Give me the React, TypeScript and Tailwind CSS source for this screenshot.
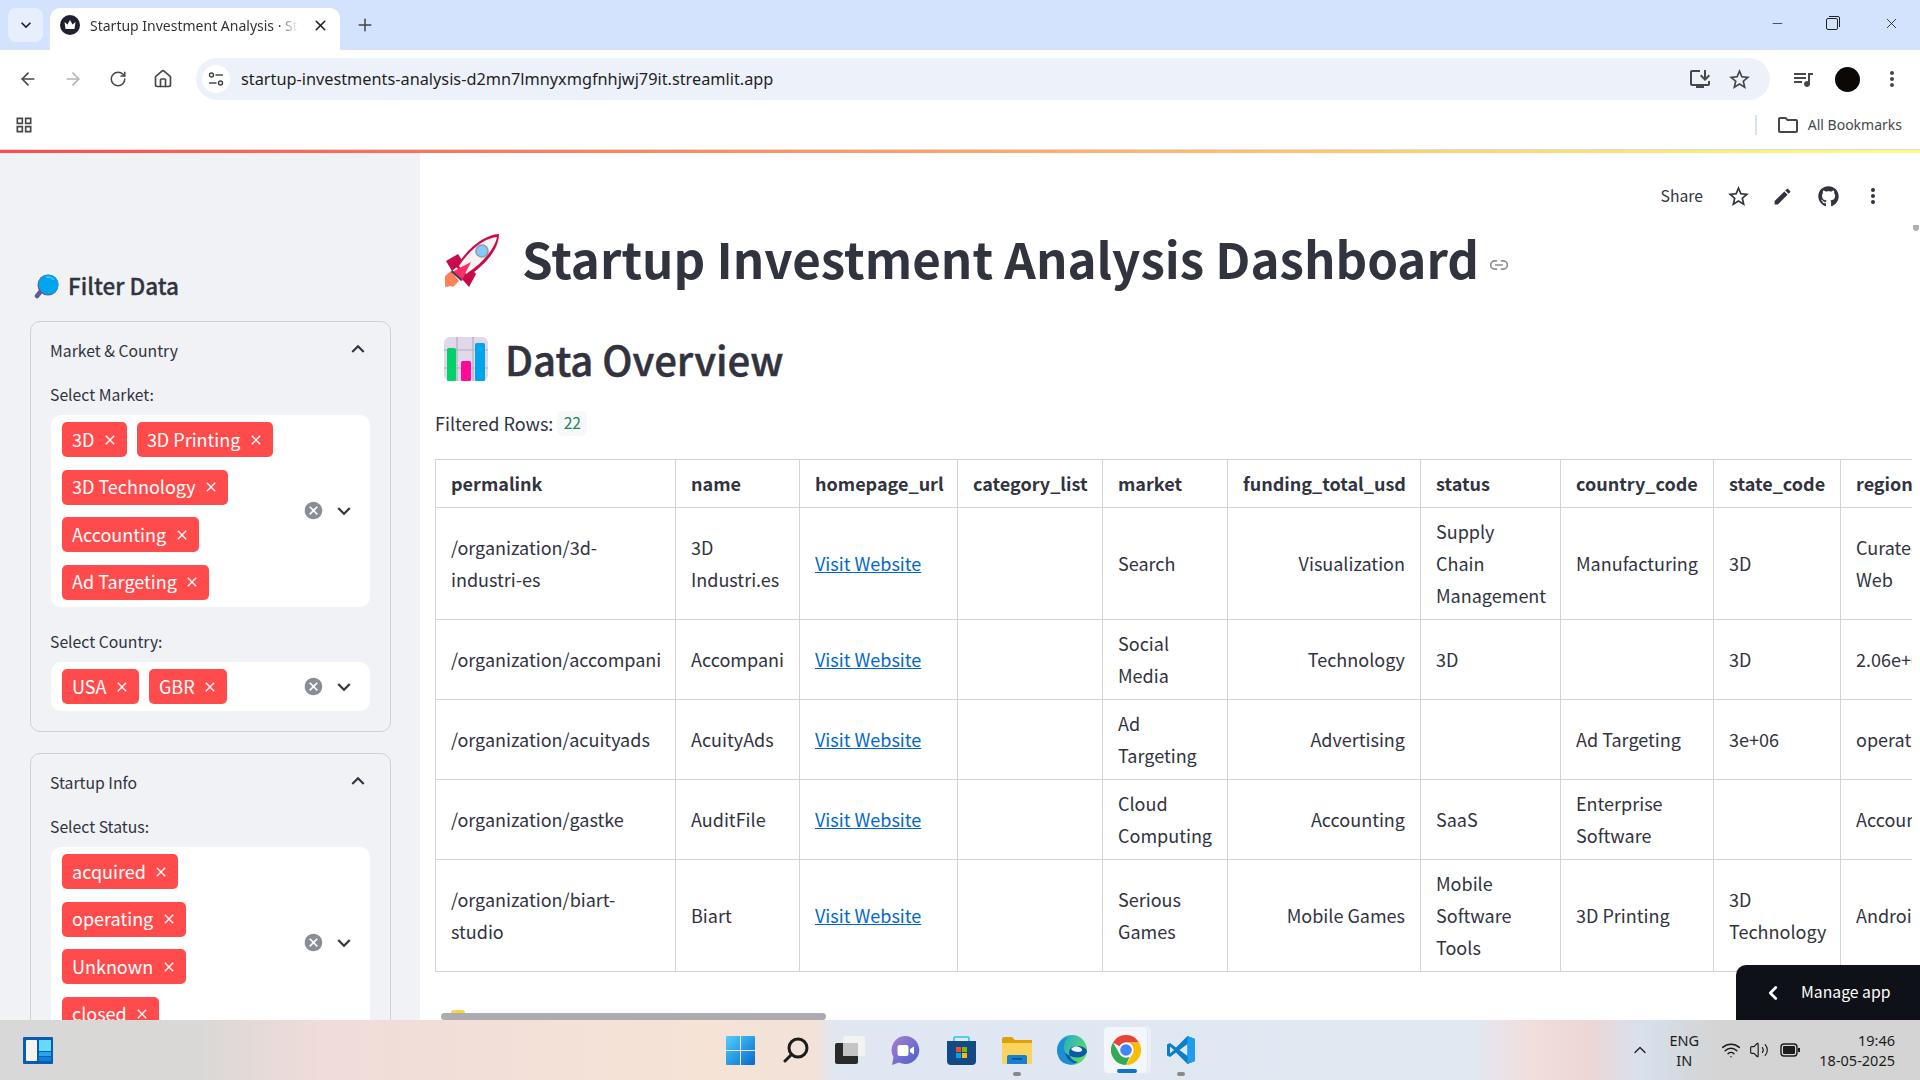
import { ArrowLeft, ArrowRight, RotateCw, Home, Link2, Wifi, Volume2, ChevronUp, ChevronLeft, Plus, X, Minus } from 'lucide-react'
import { FaGithub } from 'react-icons/fa'
import {
  MdEdit,
  MdStarBorder,
  MdMoreVert,
  MdExpandMore,
  MdExpandLess,
  MdCancel,
  MdClose,
  MdOutlineInstallDesktop,
  MdQueueMusic,
  MdOutlineFolder,
  MdKeyboardArrowDown,
  MdGridView,
} from 'react-icons/md'

function Crown() {
  return (
    <svg viewBox="0 0 20 20" className="w-5 h-5 shrink-0">
      <circle cx="10" cy="10" r="10" fill="#1f2030" />
      <path d="M4.5 7 L7.5 9.5 L10 5 L12.5 9.5 L15.5 7 L14.5 14 H5.5 Z" fill="#fff" />
    </svg>
  )
}

function Tune() {
  return (
    <svg viewBox="0 0 16 16" className="w-4 h-4" fill="none" stroke="#3c4043" strokeWidth="1.4">
      <circle cx="3.5" cy="4" r="2" />
      <path d="M7.5 4 H15" />
      <circle cx="12.5" cy="12" r="2" />
      <path d="M1 12 H8.5" />
    </svg>
  )
}

function Rocket() {
  return (
    <svg viewBox="0 0 54 54" className="w-[54px] h-[54px] shrink-0">
      <path d="M0 53 V42 L6 37 L14 47 L8 53 Q5 51 3 53 Q1 52 0 53 Z" fill="#ff8257" />
      <path d="M1 27 L13 20 L18 28 L7 37 Z" fill="#c8094a" />
      <path d="M24 53 L31 40 L24 32 L17 45 Z" fill="#c8094a" />
      <path d="M54 0 C40 1 24 12 11 33 L22 43 C42 30 54 14 54 0 Z" fill="#ca0b4a" />
      <path d="M52 3 C40 4 26 14 14 32 L21 40 C38 29 50 14 52 3 Z" fill="#f4f4f4" />
      <circle cx="37" cy="17" r="6" fill="#83cbff" stroke="#9b9b9b" strokeWidth="1.6" />
      <path d="M26 28 L7 38 L17 46 Z" fill="#ff2e63" />
      <path d="M7 36 L18 46 L16 47 L6 38 Z" fill="#533566" />
    </svg>
  )
}

function ChartEmoji() {
  return (
    <svg viewBox="0 0 44 44" className="w-11 h-11 shrink-0">
      <rect width="44" height="44" rx="6" fill="#e1d8ec" />
      <path d="M13 0 V44 M29 0 V44 M0 13 H44 M0 31 H44" stroke="#b4acbc" strokeWidth="1.2" />
      <rect x="3" y="11" width="9" height="33" rx="1.5" fill="#00d26a" />
      <rect x="17" y="24" width="10" height="20" rx="1.5" fill="#ff0a96" />
      <rect x="31" y="6" width="10" height="38" rx="1.5" fill="#00a6ed" />
    </svg>
  )
}

function Magnifier() {
  return (
    <svg viewBox="0 0 25 25" className="w-[25px] h-[25px] shrink-0">
      <path d="M7 17 L3 22" stroke="#635994" strokeWidth="4.5" strokeLinecap="round" />
      <circle cx="14" cy="11" r="10.5" fill="#635994" />
      <circle cx="14.5" cy="10.5" r="10" fill="#00a6ed" />
      <path d="M12 3 A8 8 0 0 1 20 6" stroke="#7fd4f7" strokeWidth="1" fill="none" />
    </svg>
  )
}

function Widgets() {
  return (
    <svg viewBox="0 0 30 27" className="w-[30px] h-[27px]">
      <rect width="30" height="27" rx="1" fill="#0b5cad" />
      <rect x="3" y="3" width="11" height="21" rx="1" fill="#f4f4f4" />
      <rect x="16" y="3" width="12" height="11" fill="#66d9ff" />
      <rect x="16" y="15" width="12" height="4" fill="#2aa4ea" />
      <rect x="16" y="20" width="12" height="4" fill="#0b84e0" />
    </svg>
  )
}

function StartIcon() {
  return (
    <svg viewBox="0 0 29 29" className="w-[29px] h-[29px]">
      <defs>
        <linearGradient id="win" x1="0" y1="0" x2="1" y2="1">
          <stop offset="0" stopColor="#52cffb" />
          <stop offset="1" stopColor="#0669cf" />
        </linearGradient>
      </defs>
      <path d="M1 0 H14 V14 H0 V1 Q0 0 1 0 Z M15 0 H28 Q29 0 29 1 V14 H15 Z M0 15 H14 V29 H1 Q0 29 0 28 Z M15 15 H29 V28 Q29 29 28 29 H15 Z" fill="url(#win)" />
    </svg>
  )
}

function SearchIcon() {
  return (
    <svg viewBox="0 0 26 26" className="w-[26px] h-[26px]" fill="none" stroke="#1c1c1c" strokeWidth="3">
      <circle cx="15" cy="11" r="9" />
      <path d="M8.5 17.5 L2 24" strokeLinecap="round" />
    </svg>
  )
}

function TaskView() {
  return (
    <svg viewBox="0 0 30 28" className="w-[30px] h-[28px]">
      <rect x="0" y="7" width="23" height="21" rx="2" fill="#2a2a2a" />
      <rect x="8" y="0" width="22" height="20" rx="2" fill="#f7f4f2" fillOpacity="0.85" />
      <rect x="8" y="7" width="15" height="13" fill="#c4c4c4" />
    </svg>
  )
}

function ChatIcon() {
  return (
    <svg viewBox="0 0 29 29" className="w-[29px] h-[29px]">
      <defs>
        <linearGradient id="chat" x1="0" y1="0" x2="1" y2="1">
          <stop offset="0" stopColor="#a97fd0" />
          <stop offset="1" stopColor="#4a5fc9" />
        </linearGradient>
      </defs>
      <path d="M15 0 A14 14 0 1 1 8 26.5 L1 29 L2.5 21 A14 14 0 0 1 15 0 Z" fill="url(#chat)" />
      <rect x="6.5" y="9" width="11" height="11" rx="2" fill="#fff" />
      <path d="M19 13 L23 10.5 V18.5 L19 16 Z" fill="#fff" />
    </svg>
  )
}

function StoreIcon() {
  return (
    <svg viewBox="0 0 29 29" className="w-[29px] h-[29px]">
      <path d="M7 7 V2 Q7 1 8 1 H21 Q22 1 22 2 V7" fill="none" stroke="#2cc3f0" strokeWidth="1.6" />
      <path d="M0 5 H29 V25 Q29 29 25 29 H4 Q0 29 0 25 Z" fill="#134a85" />
      <rect x="9" y="11" width="5" height="5" fill="#f25022" />
      <rect x="15" y="11" width="5" height="5" fill="#7fba00" />
      <rect x="9" y="17" width="5" height="5" fill="#00a4ef" />
      <rect x="15" y="17" width="5" height="5" fill="#ffb900" />
    </svg>
  )
}

function ExplorerIcon() {
  return (
    <svg viewBox="0 0 30 27" className="w-[30px] h-[27px]">
      <path d="M0 2 Q0 0 2 0 H10 L13 3 H30 V8 H0 Z" fill="#d9a20a" />
      <path d="M0 6 H30 V27 H0 Z" fill="#fcd35d" />
      <path d="M5 20 Q5 18 7 18 H23 Q25 18 25 20 V27 H5 Z" fill="#1b7fd0" />
      <rect x="10" y="21" width="10" height="1.6" fill="#0d4f8f" />
    </svg>
  )
}

function EdgeIcon() {
  return (
    <svg viewBox="0 0 30 30" className="w-[30px] h-[30px]">
      <defs>
        <linearGradient id="edge1" x1="0" y1="0" x2="1" y2="0.6">
          <stop offset="0" stopColor="#1ba3d8" />
          <stop offset="1" stopColor="#5ddc6a" />
        </linearGradient>
      </defs>
      <circle cx="15" cy="15" r="15" fill="url(#edge1)" />
      <path d="M30 17 Q30 12 22 11 Q13 10 12 17 Q12 25 21 27 Q12 32 5 26 Q-2 18 3 9 Q7 20 16 22 Q27 24 30 17 Z" fill="#0c59a4" />
      <path d="M0 15 Q1 4 12 2 Q5 6 8 18 Q10 26 19 29 Q1 32 0 15 Z" fill="#1a8fd6" />
      <path d="M14 14 Q18 9 24 13 Q27 16 22 17 Q16 17 14 14 Z" fill="#f2f6fb" />
    </svg>
  )
}

function ChromeIcon() {
  return (
    <svg viewBox="0 0 30 30" className="w-[30px] h-[30px]">
      <path d="M2 7.5 A15 15 0 0 1 28 7.5 H15 A7.5 7.5 0 0 0 8.5 11.25 Z" fill="#ea4335" />
      <path d="M2 7.5 L8.5 18.75 A7.5 7.5 0 0 0 18.75 21.5 L15 30 A15 15 0 0 1 2 7.5 Z" fill="#34a853" />
      <path d="M28 7.5 H15 A7.5 7.5 0 0 1 21.5 18.75 L15 30 A15 15 0 0 0 28 7.5 Z" fill="#fbbc04" />
      <circle cx="15" cy="15" r="7.5" fill="#fff" />
      <circle cx="15" cy="15" r="5.8" fill="#4285f4" />
    </svg>
  )
}

function VSCodeIcon() {
  return (
    <svg viewBox="0 0 30 30" className="w-[30px] h-[30px]">
      <path d="M21.5 1 L10 12.5 L4 8 L1 9.5 V20.5 L4 22 L10 17.5 L21.5 29 L29 26 V4 Z M21.5 9 V21 L13.5 15 Z M4 11.5 L8 15 L4 18.5 Z" fill="#0a7fc9" fillRule="evenodd" />
      <path d="M21.5 1 L29 4 V26 L21.5 29 Z" fill="#1f9cf0" />
    </svg>
  )
}

function Tag({ label }: { label: string }) {
  return (
    <span className="h-[35px] flex items-center bg-[#ff4b4b] rounded-[5px] text-white text-[18px] pl-[10px] pr-[9px] gap-[7.5px] leading-none whitespace-nowrap">
      <span className="-mt-[2px]">{label}</span>
      <MdClose className="w-4 h-4" />
    </span>
  )
}

function MultiSelect({ tags }: { tags: string[] }) {
  return (
    <div className="flex items-center bg-white rounded-[10px] pl-[11px] py-[7px]">
      <div className="w-[228px] flex flex-wrap gap-x-[10px] gap-y-[12.5px]">
        {tags.map((t) => (
          <Tag key={t} label={t} />
        ))}
      </div>
      <div className="ml-auto flex items-center pr-[13px] gap-[7px] text-[#31333f]">
        <MdCancel className="w-[21px] h-[21px] text-[#8a8c97]" />
        <MdExpandMore className="w-[26px] h-[26px]" />
      </div>
    </div>
  )
}

function Expander({ title, children }: { title: string; children: React.ReactNode }) {
  return (
    <div className="border border-[#cfd1d6] rounded-[10px] px-5 pb-5 shrink-0">
      <div className="h-[58px] flex items-center justify-between text-[15.75px] -mr-1">
        <span className="-ml-px">{title}</span>
        <MdExpandLess className="w-[26px] h-[26px] -mt-1 mr-[3px]" />
      </div>
      {children}
    </div>
  )
}

function Field({ label, tags, first }: { label: string; tags: string[]; first?: boolean }) {
  return (
    <div className={first ? 'mt-[5px]' : 'mt-[25.5px]'}>
      <div className="h-[20px] leading-[20px] text-[15.75px] mb-[10px] -ml-px">{label}</div>
      <MultiSelect tags={tags} />
    </div>
  )
}

const colWidths = ['w-[240px]', 'w-[124px]', 'w-[158px]', 'w-[145px]', 'w-[125px]', 'w-[193px]', 'w-[140px]', 'w-[153px]', 'w-[127px]', 'w-[120px]']
const headers = ['permalink', 'name', 'homepage_url', 'category_list', 'market', 'funding_total_usd', 'status', 'country_code', 'state_code', 'region']
const rows = [
  ['/organization/3d-industri-es', '3D Industri.es', '', 'Search', 'Visualization', 'Supply Chain Management', 'Manufacturing', '3D', 'Curated Web'],
  ['/organization/accompani', 'Accompani', '', 'Social Media', 'Technology', '3D', '', '3D', '2.06e+06'],
  ['/organization/acuityads', 'AcuityAds', '', 'Ad Targeting', 'Advertising', '', 'Ad Targeting', '3e+06', 'operating'],
  ['/organization/gastke', 'AuditFile', '', 'Cloud Computing', 'Accounting', 'SaaS', 'Enterprise Software', '', 'Accounting'],
  ['/organization/biart-studio', 'Biart', '', 'Serious Games', 'Mobile Games', 'Mobile Software Tools', '3D Printing', '3D Technology', 'Android'],
]

function DataTable() {
  return (
    <div className="w-[1477px] overflow-hidden">
      <table className="table-fixed border-collapse w-[1525px] text-[18px] leading-8">
        <colgroup>
          {colWidths.map((w, i) => (
            <col key={i} className={w} />
          ))}
        </colgroup>
        <thead>
          <tr>
            {headers.map((h) => (
              <th key={h} className="border border-[#d3d4d7] px-[15px] pt-[6.5px] pb-[8.5px] text-left font-bold align-middle whitespace-nowrap">
                {h}
              </th>
            ))}
          </tr>
        </thead>
        <tbody>
          {rows.map((r) => (
            <tr key={r[0]}>
              <td className="border border-[#d3d4d7] px-[15px] pt-[6.5px] pb-[8.5px]">{r[0]}</td>
              <td className="border border-[#d3d4d7] px-[15px] pt-[6.5px] pb-[8.5px]">{r[1]}</td>
              <td className="border border-[#d3d4d7] px-[15px] pt-[6.5px] pb-[8.5px]">
                <a href="#" className="text-[#0068c9] underline whitespace-nowrap">Visit Website</a>
              </td>
              <td className="border border-[#d3d4d7] px-[15px] pt-[6.5px] pb-[8.5px]">{r[2]}</td>
              <td className="border border-[#d3d4d7] px-[15px] pt-[6.5px] pb-[8.5px]">{r[3]}</td>
              <td className="border border-[#d3d4d7] px-[15px] pt-[6.5px] pb-[8.5px] text-right">{r[4]}</td>
              <td className="border border-[#d3d4d7] px-[15px] pt-[6.5px] pb-[8.5px]">{r[5]}</td>
              <td className="border border-[#d3d4d7] px-[15px] pt-[6.5px] pb-[8.5px]">{r[6]}</td>
              <td className="border border-[#d3d4d7] px-[15px] pt-[6.5px] pb-[8.5px]">{r[7]}</td>
              <td className="border border-[#d3d4d7] px-[15px] pt-[6.5px] pb-[8.5px]">{r[8]}</td>
            </tr>
          ))}
        </tbody>
      </table>
    </div>
  )
}

function BrowserChrome() {
  return (
    <div className="font-['Noto_Sans',sans-serif] text-[#1f1f1f] shrink-0">
      {/* tab strip */}
      <div className="h-[50px] bg-[#d3e3fd] flex items-end pl-2">
        <div className="w-[35px] h-[34px] mb-2 bg-[#e8effc] rounded-lg flex items-center justify-center">
          <MdKeyboardArrowDown className="w-5 h-5" />
        </div>
        <div className="ml-[7px] w-[290px] h-[42px] bg-white rounded-t-[10px] flex items-center pl-[10px] pr-[11px] pb-[8px]">
          <Crown />
          <span className="ml-[10px] w-[208px] text-[14px] whitespace-nowrap overflow-hidden text-[#333] [mask-image:linear-gradient(to_right,black_90%,transparent)]">Startup Investment Analysis · Streamlit</span>
          <X className="ml-auto w-[17px] h-[17px]" strokeWidth={2.2} />
        </div>
        <Plus className="ml-[15px] mb-[15px] w-5 h-5 text-[#444]" strokeWidth={1.8} />
        <div className="ml-auto flex items-center h-full pb-1 text-[#222]">
          <Minus className="w-[15px] h-[15px] mr-[41px]" strokeWidth={1.2} />
          <svg viewBox="0 0 14 14" className="w-[14px] h-[14px] mr-[43px]" fill="none" stroke="#222" strokeWidth="1">
            <rect x="0.5" y="2.5" width="11" height="11" rx="1.5" />
            <path d="M3 0.5 H12 Q13.5 0.5 13.5 2 V11" />
          </svg>
          <X className="w-[17px] h-[17px] mr-[20px]" strokeWidth={1.2} />
        </div>
      </div>
      {/* toolbar */}
      <div className="h-[58px] bg-white rounded-t-[10px] flex items-center pl-[18px] py-2 text-[#474747]">
        <ArrowLeft className="w-5 h-5" />
        <ArrowRight className="w-5 h-5 ml-[25px] text-[#b4b4b4]" />
        <RotateCw className="w-[18px] h-[18px] ml-[26px]" />
        <Home className="w-5 h-5 ml-[26px]" />
        <div className="ml-[23px] w-[1574px] h-[42px] rounded-full bg-[#edf2fa] flex items-center pl-[6px] pr-[18px]">
          <div className="w-[28px] h-[28px] rounded-full bg-white flex items-center justify-center">
            <Tune />
          </div>
          <span className="ml-[11px] text-[16.3px] text-[#1f1f1f]">startup-investments-analysis-d2mn7lmnyxmgfnhjwj79it.streamlit.app</span>
          <MdOutlineInstallDesktop className="ml-auto w-6 h-6" />
          <MdStarBorder className="ml-[15px] w-[25px] h-[25px]" />
        </div>
        <MdQueueMusic className="ml-[21px] w-6 h-6" />
        <div className="ml-[20px] w-[25px] h-[25px] rounded-full bg-[#0b0806]" />
        <MdMoreVert className="ml-[20px] w-6 h-6" />
      </div>
      {/* bookmarks */}
      <div className="h-[42px] bg-white border-b border-[#dadce0] flex items-center pl-[14px] pb-2 text-[#474747]">
        <MdGridView className="w-5 h-5" />
        <div className="ml-auto w-[2px] h-5 bg-[#d3e3fd]" />
        <MdOutlineFolder className="ml-[19px] w-6 h-6" />
        <span className="ml-2 mr-[18px] text-[14px]">All Bookmarks</span>
      </div>
      <div className="h-[3px] bg-[linear-gradient(to_right,#ff4b4b,#fffd80)]" />
    </div>
  )
}

function Sidebar() {
  return (
    <aside className="w-[420px] h-full shrink-0 bg-[#f0f2f6] pl-[30px] pr-[29px] pt-[115px] flex flex-col overflow-hidden">
      <div className="h-9 flex items-center gap-[9px] pl-1 mb-[17px] shrink-0">
        <Magnifier />
        <span className="text-[22.5px] font-medium [-webkit-text-stroke:0.3px_#31333f]">Filter Data</span>
      </div>
      <Expander title="Market & Country">
        <Field first label="Select Market:" tags={['3D', '3D Printing', '3D Technology', 'Accounting', 'Ad Targeting']} />
        <Field label="Select Country:" tags={['USA', 'GBR']} />
      </Expander>
      <div className="h-[21px] shrink-0" />
      <Expander title="Startup Info">
        <Field first label="Select Status:" tags={['acquired', 'operating', 'Unknown', 'closed']} />
      </Expander>
    </aside>
  )
}

function MainArea() {
  return (
    <main className="relative flex-1 h-full bg-white pl-[15px] pt-[23px] overflow-hidden">
      <div className="h-10 flex items-center justify-end pr-[35px] text-[#31333f]">
        <span className="text-[15.75px] mr-[23px]">Share</span>
        <MdStarBorder className="w-[25px] h-[25px] mr-[21px]" />
        <MdEdit className="w-[21px] h-[21px] mr-[25px]" />
        <FaGithub className="w-[21px] h-[21px] mr-[22px]" />
        <MdMoreVert className="w-6 h-6" />
      </div>
      {/* title */}
      <div className="mt-[10px] h-[70px] flex items-center pl-[10px]">
        <Rocket />
        <h1 className="ml-[23px] text-[49.25px] font-bold leading-[70px] -mt-[6px] whitespace-nowrap">Startup Investment Analysis Dashboard</h1>
        <Link2 className="ml-[10px] mt-2 w-5 h-5 text-[#8c8d94]" />
      </div>
      {/* section */}
      <div className="mt-[35px] h-[56px] flex items-center pl-[9px]">
        <ChartEmoji />
        <h2 className="ml-[17px] text-[40.1px] font-medium leading-[56px] whitespace-nowrap [-webkit-text-stroke:0.5px_#31333f]">Data Overview</h2>
      </div>
      <div className="mt-[20px] h-[32px] flex items-center text-[18px]">
        <span>Filtered Rows:</span>
        <span className="ml-[4px] w-[30px] h-[25px] rounded-[5px] bg-[#f7f8fa] text-[#21854f] text-[15.75px] flex items-center justify-center">22</span>
      </div>
      <div className="mt-[20px]">
        <DataTable />
      </div>
      {/* overlays */}
      <div className="absolute left-[31px] bottom-[7px] w-[14px] h-[3px] rounded-t-full bg-[#fbd24a]" />
      <div className="absolute left-[21px] bottom-0 w-[385px] h-[7px] rounded-full bg-[#acabb0]" />
      <div className="absolute right-[1px] top-[72px] w-[6px] h-[6px] rounded-b-sm bg-[#b0b0b3]" />
      <div className="absolute right-0 bottom-0 w-[184px] h-[55px] bg-[#0e1117] rounded-tl-[10px] text-white flex items-center pl-[26px]">
        <ChevronLeft className="w-[22px] h-[22px]" strokeWidth={3} />
        <span className="ml-[17px] -mt-[2px] text-[15.75px]">Manage app</span>
      </div>
    </main>
  )
}

function Taskbar() {
  return (
    <div className="relative h-[60px] shrink-0 flex items-center pl-[23px] font-['Noto_Sans',sans-serif] text-[#1c1c1c] bg-[linear-gradient(to_right,#d8d8d8_0,#dad8d6_200px,#f0dcd9_320px,#f5e3d6_700px,#f3e2d8_815px,#dfe7f2_835px,#e0e8f2_1470px,#f3dede_1530px,#ecd6d6_1590px,#d9e1ee_1640px,#d4d8dc_1690px,#d4d4d4_1720px)]">
      <Widgets />
      <div className="ml-[660px] flex items-center">
        <div className="w-[55px] flex justify-center"><StartIcon /></div>
        <div className="w-[55px] flex justify-center"><SearchIcon /></div>
        <div className="w-[53px] flex justify-center"><TaskView /></div>
        <div className="w-[59px] flex justify-center"><ChatIcon /></div>
        <div className="w-[53px] flex justify-center"><StoreIcon /></div>
        <div className="relative w-[57px] flex justify-center">
          <ExplorerIcon />
          <div className="absolute -bottom-[12px] w-2 h-[4px] rounded-full bg-[#8a8a8a]" />
        </div>
        <div className="w-[53px] flex justify-center"><EdgeIcon /></div>
        <div className="relative w-[55px] h-[48px] flex items-center justify-center">
          <div className="absolute inset-y-0 left-[4.5px] w-[45px] rounded-[5px] border border-[#e4e9f1] bg-[#f3f6fb] shadow-[3px_0_0_#eaf0f8]" />
          <div className="relative"><ChromeIcon /></div>
          <div className="absolute bottom-[1px] left-[18.5px] w-5 h-[4px] rounded-full bg-[#0b74d0]" />
        </div>
        <div className="relative w-[55px] flex justify-center">
          <VSCodeIcon />
          <div className="absolute -bottom-[11px] w-2 h-[4px] rounded-full bg-[#8a8a8a]" />
        </div>
      </div>
      <div className="ml-auto flex items-center pr-[25px] text-[14.5px] leading-5">
        <ChevronUp className="w-[20px] h-[20px]" strokeWidth={1.5} />
        <div className="ml-[19px] w-[30px] text-center">ENG<br />IN</div>
        <Wifi className="ml-[22px] w-5 h-5" strokeWidth={1.8} />
        <Volume2 className="ml-2 w-5 h-5" strokeWidth={1.4} />
        <svg viewBox="0 0 20 14" className="ml-[11px] w-5 h-[14px]" fill="none" stroke="#1c1c1c" strokeWidth="1.4">
          <rect x="1" y="1" width="16" height="12" rx="3" />
          <rect x="3" y="3" width="12" height="8" rx="1" fill="#1c1c1c" stroke="none" />
          <path d="M19 5 V9" strokeWidth="2" />
        </svg>
        <div className="ml-[19px] text-right">19:46<br />18-05-2025</div>
      </div>
    </div>
  )
}

export default function App() {
  return (
    <div className="w-[1920px] h-[1080px] flex flex-col overflow-hidden bg-white text-[#31333f] font-['Noto_Sans_CJK_SC','Source_Sans_Pro',sans-serif]">
      <BrowserChrome />
      <div className="flex-1 min-h-0 flex">
        <Sidebar />
        <MainArea />
      </div>
      <Taskbar />
    </div>
  )
}
